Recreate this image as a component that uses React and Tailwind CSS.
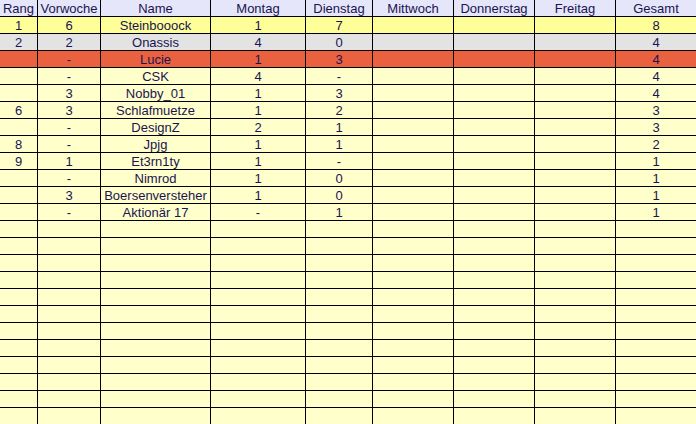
const headers = ['Rang', 'Vorwoche', 'Name', 'Montag', 'Dienstag', 'Mittwoch', 'Donnerstag', 'Freitag', 'Gesamt'];

const rows = [
  { bg: 'bg-[#ffff99]', cells: ['1', '6', 'Steinbooock', '1', '7', '', '', '', '8'] },
  { bg: 'bg-[#e3e3e3]', cells: ['2', '2', 'Onassis', '4', '0', '', '', '', '4'] },
  { bg: 'bg-[#ea6140]', cells: ['', '-', 'Lucie', '1', '3', '', '', '', '4'] },
  { cells: ['', '-', 'CSK', '4', '-', '', '', '', '4'] },
  { cells: ['', '3', 'Nobby_01', '1', '3', '', '', '', '4'] },
  { cells: ['6', '3', 'Schlafmuetze', '1', '2', '', '', '', '3'] },
  { cells: ['', '-', 'DesignZ', '2', '1', '', '', '', '3'] },
  { cells: ['8', '-', 'Jpjg', '1', '1', '', '', '', '2'] },
  { cells: ['9', '1', 'Et3rn1ty', '1', '-', '', '', '', '1'] },
  { cells: ['', '-', 'Nimrod', '1', '0', '', '', '', '1'] },
  { cells: ['', '3', 'Boersenversteher', '1', '0', '', '', '', '1'] },
  { cells: ['', '-', 'Aktionär 17', '-', '1', '', '', '', '1'] },
];

// restliche Zeilen leer auffüllen
while (rows.length < 24) rows.push({ cells: Array(9).fill('') });

export default function App() {
  return (
    <div className="w-[696px] h-[424px] overflow-hidden bg-black font-['Liberation_Sans',Arial,sans-serif] text-[13px] text-[#1a1450]">
      <div className="grid grid-cols-[37px_62px_109px_94px_66px_80px_80px_80px_80px] auto-rows-[16px] gap-px">
        {headers.map((h) => (
          <div key={h} className="bg-[#e6e6fa] h-4 leading-[18px] text-center whitespace-nowrap overflow-hidden">
            {h}
          </div>
        ))}
        {rows.map((r, i) =>
          r.cells.map((c, j) => (
            <div key={`${i}-${j}`} className={`${r.bg || 'bg-[#ffffcc]'} h-4 leading-[18px] text-center whitespace-nowrap`}>
              {c}
            </div>
          ))
        )}
      </div>
    </div>
  );
}
